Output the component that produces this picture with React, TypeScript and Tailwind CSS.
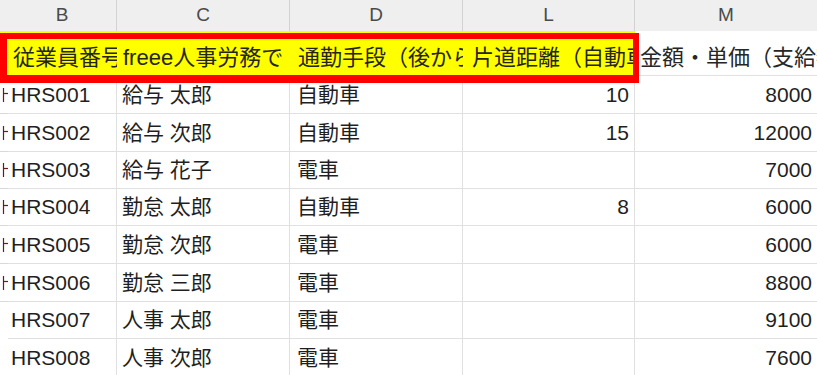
import React from "react";

const font = { fontFamily: '"Liberation Sans", "Noto Sans CJK JP", sans-serif' };

const rows = [
  { id: "HRS001", name: "給与 太郎", way: "自動車", km: "10", amt: "8000", h: "h-[38px]", mark: true },
  { id: "HRS002", name: "給与 次郎", way: "自動車", km: "15", amt: "12000", h: "h-[38px]", mark: true },
  { id: "HRS003", name: "給与 花子", way: "電車", km: "", amt: "7000", h: "h-[37px]", mark: true },
  { id: "HRS004", name: "勤怠 太郎", way: "自動車", km: "8", amt: "6000", h: "h-[37px]", mark: true },
  { id: "HRS005", name: "勤怠 次郎", way: "電車", km: "", amt: "6000", h: "h-[38px]", mark: true },
  { id: "HRS006", name: "勤怠 三郎", way: "電車", km: "", amt: "8800", h: "h-[38px]", mark: true },
  { id: "HRS007", name: "人事 太郎", way: "電車", km: "", amt: "9100", h: "h-[37px]", mark: false },
  { id: "HRS008", name: "人事 次郎", way: "電車", km: "", amt: "7600", h: "h-[38px]", mark: false },
];

// clipped right edge of the column A text
const Mark = () => (
  <svg width="8" height="16" viewBox="0 0 8 16">
    <line x1="3.5" y1="1" x2="3.5" y2="15" stroke="#6b1a1a" strokeWidth="1.2" />
    <line x1="3.5" y1="6.5" x2="8" y2="6.5" stroke="#6b1a1a" strokeWidth="1.2" />
  </svg>
);

export default function App() {
  return (
    <div className="relative w-[817px] h-[375px] overflow-hidden bg-white text-[#1f1f1f]" style={font}>
      {/* column letters */}
      <div className="flex h-[31px] bg-[#efefef] text-[19px] text-[#4a4a4a]">
        <div className="w-[8px]" />
        <div className="w-[109px] flex items-center justify-center border-r border-[#d2d2d2]">B</div>
        <div className="w-[173px] flex items-center justify-center border-r border-[#d2d2d2]">C</div>
        <div className="w-[173px] flex items-center justify-center border-r border-[#d2d2d2]">D</div>
        <div className="w-[172px] flex items-center justify-center border-r border-[#d2d2d2]">L</div>
        <div className="flex-1 flex items-center justify-center">M</div>
      </div>

      {/* header row */}
      <div className="flex h-[45px] text-[22px] text-[#262618] whitespace-nowrap">
        <div className="w-[8px] bg-[#ffff00]" />
        <div className="w-[109px] bg-[#ffff00] overflow-hidden flex items-center pt-[8px] pl-[5px]">従業員番号</div>
        <div className="w-[173px] bg-[#ffff00] overflow-hidden flex items-center pt-[8px] pl-[6px]">freee人事労務で</div>
        <div className="w-[173px] bg-[#ffff00] overflow-hidden flex items-center pt-[8px] pl-[8px]">通勤手段（後から選択）</div>
        <div className="w-[172px] bg-[#ffff00] overflow-hidden flex items-center pt-[8px] pl-[9px]">片道距離（自動車）</div>
        <div className="flex-1 overflow-hidden flex items-center pt-[8px] pl-[5px] border-b border-[#e0e0e0] text-[#262626]">金額・単価（支給額）</div>
      </div>

      {/* data rows */}
      {rows.map((r) => (
        <div key={r.id} className={`flex text-[21px] whitespace-nowrap ${r.h}`}>
          <div className={r.mark ? "w-[8px] flex items-center border-b border-[#d9d9d9]" : "w-[8px]"}>
            {r.mark && <Mark />}
          </div>
          <div className="w-[109px] flex items-center pl-[3px] border-r border-b border-[#e0e0e0]">{r.id}</div>
          <div className="w-[173px] flex items-center pl-[5px] border-r border-b border-[#e0e0e0]">{r.name}</div>
          <div className="w-[173px] flex items-center pl-[7px] border-r border-b border-[#e0e0e0]">{r.way}</div>
          <div className="w-[172px] flex items-center justify-end pr-[5px] border-r border-b border-[#e0e0e0]">{r.km}</div>
          <div className="flex-1 flex items-center justify-end pr-[5px] border-b border-[#e0e0e0]">{r.amt}</div>
        </div>
      ))}

      {/* red annotation box */}
      <div className="absolute left-0 top-[33px] w-[639px] h-[50px] border-t-[6px] border-b-[8px] border-l-[7px] border-r-[6px] border-[#ff0000]" />
    </div>
  );
}
